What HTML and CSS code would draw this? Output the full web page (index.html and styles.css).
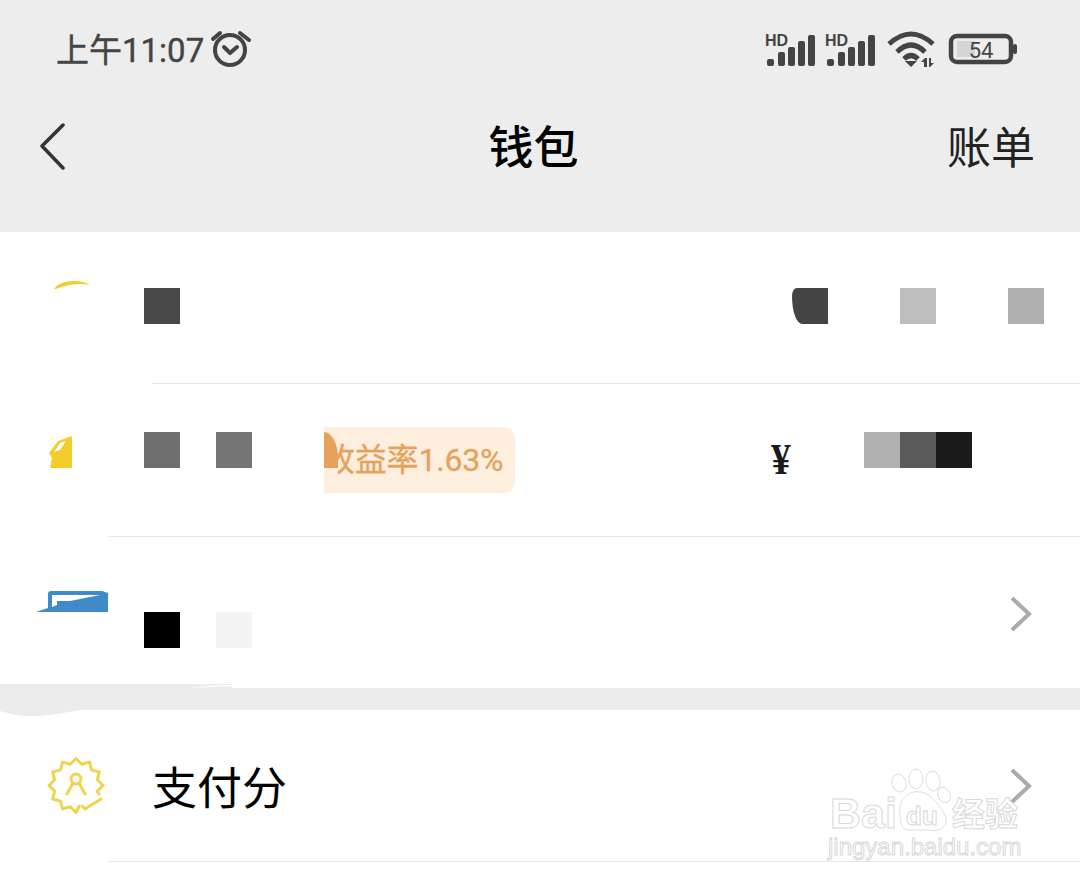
FILE: index.html
```html
<!DOCTYPE html>
<html lang="zh-CN">
<head>
    <meta charset="UTF-8">
    <meta name="viewport" content="width=device-width, initial-scale=1.0">
    <title>钱包</title>
    <link rel="stylesheet" href="styles.css">
</head>
<body>
    <div class="page">
        <header class="top">
            <div class="status-bar">
                <span class="clock">上午11:07</span>
                <svg class="alarm" width="44" height="40" viewBox="210 29 44 40">
                    <circle cx="230" cy="50" r="15" />
                    <path d="M213 39 L220 33 M240 33 L249 40 M224 47 L230 53 L237 47" />
                </svg>
                <div class="status-icons">
                    <svg class="signal" width="52" height="36" viewBox="765 30 52 36">
                        <text class="hd" x="765" y="45">HD</text>
                        <rect x="767" y="58" width="7" height="7" rx="2" />
                        <rect x="778" y="51" width="7" height="14" rx="2" />
                        <rect x="788" y="46" width="7" height="19" rx="2" />
                        <rect x="798" y="40" width="7" height="25" rx="2" />
                        <rect x="808" y="34" width="7" height="31" rx="2" />
                    </svg>
                    <svg class="signal" width="52" height="36" viewBox="765 30 52 36">
                        <text class="hd" x="765" y="45">HD</text>
                        <rect x="767" y="58" width="7" height="7" rx="2" />
                        <rect x="778" y="51" width="7" height="14" rx="2" />
                        <rect x="788" y="46" width="7" height="19" rx="2" />
                        <rect x="798" y="40" width="7" height="25" rx="2" />
                        <rect x="808" y="34" width="7" height="31" rx="2" />
                    </svg>
                    <svg class="wifi" width="48" height="38" viewBox="887 30 48 38">
                        <path class="wifi-arc" d="M889 44 Q911 24 933 44 M897 52 Q911 38 925 52 M904 59 Q911 52 918 59" />
                        <path class="wifi-fill" d="M905 61 L917 61 L911 67 Z M924 67 L924 62 L921 62 L925 58 L927 58 L927 67 Z M929 58 L931 58 L931 63 L934 63 L930 67 L929 67 Z" />
                    </svg>
                    <svg class="battery" width="70" height="32" viewBox="948 33 70 32">
                        <rect class="battery-level" x="957" y="41" width="18" height="16" />
                        <rect class="battery-shell" x="951" y="36" width="60" height="26" rx="6" />
                        <rect class="battery-nub" x="1013" y="44" width="4" height="10" rx="2" />
                        <text class="battery-text" x="981" y="58">54</text>
                    </svg>
                </div>
            </div>
            <nav class="nav-bar">
                <div class="nav-back">
                    <svg width="26" height="48" viewBox="40 121 26 48">
                        <path d="M63 124 L42 145 L63 167" />
                    </svg>
                </div>
                <h1 class="nav-title">钱包</h1>
                <a class="nav-link">账单</a>
            </nav>
        </header>

        <section class="list">
            <div class="row row-first">
                <svg class="row-icon" width="144" height="152" viewBox="0 232 144 152">
                    <path class="icon-yellow" d="M54 289 Q60 281 74 281 Q84 281 90 285 Q74 282 56 289 Z" />
                </svg>
                <div class="row-body row-body-first">
                    <span class="px px-a"></span>
                    <div class="px-group px-group-right">
                        <span class="px px-b"></span>
                        <span class="px px-c"></span>
                        <span class="px px-d"></span>
                    </div>
                </div>
            </div>

            <div class="row">
                <svg class="row-icon" width="144" height="153" viewBox="0 384 144 153">
                    <path class="icon-yellow" d="M50 468 L52 458 L49 453 L58 441 L72 436 L72 468 Z" />
                    <path class="icon-white" d="M54 452 L60 443 L66 441 L60 450 Z" />
                </svg>
                <div class="row-body row-body-second">
                    <div class="px-group">
                        <span class="px px-e"></span>
                        <span class="px px-f"></span>
                    </div>
                    <div class="rate-tag">
                        <span class="rate-block"></span>
                        <span class="rate-clip"><span class="rate-text">收益率1.63%</span></span>
                    </div>
                    <span class="yen">¥</span>
                    <div class="amount">
                        <span class="px px-g"></span>
                        <span class="px px-h"></span>
                        <span class="px px-i"></span>
                    </div>
                </div>
            </div>

            <div class="row row-last">
                <svg class="row-icon" width="144" height="151" viewBox="0 537 144 151">
                    <path class="icon-blue" d="M36 612 L48 608 L48 594 Q48 591 51 591 L102 591 L108 593 L108 612 Z" />
                    <path class="icon-white" d="M52 595 L100 595 L70 601 L57 601 L57 605 L52 607 Z" />
                </svg>
                <div class="row-body row-body-third">
                    <div class="px-group">
                        <span class="px px-j"></span>
                        <span class="px px-k"></span>
                    </div>
                    <svg class="chevron chevron-third" width="24" height="38" viewBox="0 0 24 38">
                        <path d="M3 3 L20 19 L3 35" />
                    </svg>
                </div>
            </div>
        </section>

        <div class="gap"></div>

        <section class="list">
            <div class="row row-score">
                <svg class="row-icon" width="144" height="152" viewBox="0 710 144 152">
                    <g class="badge">
                        <path d="M79 806 L76 812.500 L70.300 806.800 L62.500 808.900 L60.400 801.100 L52.600 799 L54.700 791.200 L49 785.500 L54.700 779.800 L52.600 772 L60.400 769.900 L62.500 762.100 L70.300 764.200 L76 758.500 L81.700 764.200 L89.500 762.100 L91.600 769.900 L99.400 772 L97.300 779.800 L103 785.500 L97.300 791.200 L99 794" />
                        <circle cx="76" cy="779" r="5" />
                        <path d="M67 794 L73 783 M85 794 L79 783 M82 806 L85 809 L101 799" />
                    </g>
                </svg>
                <div class="row-body row-body-score">
                    <span class="score-label">支付分</span>
                    <svg class="chevron" width="24" height="38" viewBox="0 0 24 38">
                        <path d="M3 3 L20 19 L3 35" />
                    </svg>
                </div>
            </div>
        </section>

        <!-- smeared edge of the grey band -->
        <svg class="smear" width="260" height="40" viewBox="0 680 260 40">
            <path class="smear-grey" d="M0 684 L232 684 L232 710 L80 710 Q50 716 30 716 Q15 716 0 711 Z" />
            <path class="smear-white" d="M190 688 Q210 685 232 685 L232 686 Q210 687 190 688 Z" />
        </svg>

        <svg class="watermark" width="210" height="110" viewBox="825 760 210 110">
            <text class="wm-big" x="830" y="828">Bai</text>
            <ellipse cx="899" cy="783" rx="7" ry="9" transform="rotate(-15 899 783)" />
            <ellipse cx="916" cy="779" rx="7" ry="10" />
            <ellipse cx="933" cy="781" rx="7" ry="10" transform="rotate(-10 933 781)" />
            <ellipse cx="944" cy="795" rx="6" ry="8" transform="rotate(-25 944 795)" />
            <path d="M900 814 C898 800 908 790 920 792 C930 792 944 810 946 818 C948 828 938 832 930 830 L908 830 C902 830 900 824 900 814 Z" />
            <text class="wm-du" x="906" y="825">du</text>
            <text class="wm-cjk" x="952" y="826">经验</text>
            <text class="wm-url" x="828" y="855">jingyan.baidu.com</text>
        </svg>
    </div>
</body>
</html>
```

FILE: styles.css
```css
* {
    margin: 0;
    padding: 0;
    box-sizing: border-box;
}

body {
    background: white;
    font-family: "Roboto", "Noto Sans CJK SC", sans-serif;
}

.page {
    position: relative;
    width: 1080px;
    height: 884px;
    overflow: hidden;
    background: white;
}

.top {
    height: 232px;
    background: #ededed;
}

.status-bar {
    display: flex;
    align-items: center;
    height: 98px;
    padding-left: 56px;
    color: #444;
}

.clock {
    margin-top: 3px;
    font-size: 33px;
    line-height: 40px;
    width: 154px;
    white-space: nowrap;
    -webkit-text-stroke: 0.4px #444;
}

.alarm {
    fill: none;
    stroke: #444;
    stroke-width: 4;
    stroke-linecap: round;
    stroke-linejoin: round;
}

.status-icons {
    display: flex;
    align-items: center;
    margin-left: auto;
    margin-right: 62px;
    gap: 8px;
}

.signal {
    fill: #444;
}

.hd {
    font-family: "Liberation Sans", sans-serif;
    font-size: 16px;
    font-weight: 700;
}

.wifi {
    margin-left: 2px;
    margin-right: 5px;
}

.wifi-arc {
    fill: none;
    stroke: #444;
    stroke-width: 5;
}

.wifi-fill {
    fill: #444;
}

.battery-level {
    fill: #d5d5d5;
}

.battery-shell {
    fill: none;
    stroke: #444;
    stroke-width: 4.5;
}

.battery-nub {
    fill: #444;
}

.battery-text {
    font-family: "Roboto", sans-serif;
    font-size: 22px;
    fill: #444;
    text-anchor: middle;
}

.nav-bar {
    display: flex;
    align-items: center;
    height: 96px;
    padding-left: 40px;
    padding-right: 46px;
}

.nav-back {
    display: flex;
    width: 80px;
}

.nav-back path {
    fill: none;
    stroke: #333;
    stroke-width: 3.5;
    stroke-linecap: round;
    stroke-linejoin: round;
}

.nav-title {
    flex: 1;
    margin-top: -2px;
    font-family: "Noto Sans CJK SC", sans-serif;
    font-size: 45px;
    font-weight: 500;
    line-height: 60px;
    text-align: center;
    color: #000;
}

.nav-link {
    margin-top: -2px;
    margin-right: -1px;
    font-family: "Noto Sans CJK SC", sans-serif;
    font-size: 44px;
    line-height: 60px;
    color: #222;
}

.list {
    background: white;
}

.row {
    position: relative;
    display: flex;
    align-items: flex-start;
    height: 153px;
}

.row::after {
    content: "";
    position: absolute;
    left: 108px;
    right: 0;
    bottom: 0;
    height: 1px;
    background: #e6e6e6;
}

.row-first {
    height: 152px;
}

.row-first::after {
    left: 152px;
}

.row-last {
    height: 151px;
}

.row-last::after {
    display: none;
}

.row-score {
    height: 152px;
}

.row-icon {
    flex-shrink: 0;
    display: block;
}

.icon-yellow {
    fill: #f3cd2c;
}

.icon-white {
    fill: white;
}

.icon-blue {
    fill: #3f8bc9;
}

.badge {
    fill: none;
    stroke: #eed44f;
    stroke-width: 3;
    stroke-linecap: round;
    stroke-linejoin: round;
}

.row-body {
    flex: 1;
    display: flex;
    align-items: flex-start;
}

.row-body-first {
    padding-top: 56px;
    padding-right: 36px;
}

.row-body-second {
    padding-top: 48px;
    padding-right: 108px;
}

.row-body-third {
    padding-top: 75px;
    padding-right: 47px;
    justify-content: space-between;
}

.row-body-score {
    align-self: stretch;
    align-items: center;
    justify-content: space-between;
    padding-left: 8px;
    padding-right: 47px;
}

.px-group {
    display: flex;
    gap: 36px;
}

.px-group-right {
    margin-left: auto;
    gap: 72px;
}

.px {
    display: block;
    width: 36px;
    height: 36px;
}

.px-a { background: #484848; }
.px-b { background: #444; border-radius: 5px 0 0 10px / 8px 0 0 28px; }
.px-c { background: #bdbdbd; }
.px-d { background: #afafaf; }
.px-e { background: #6e6e6e; }
.px-f { background: #757575; }
.px-g { background: #b0b0b0; }
.px-h { background: #5a5a5a; }
.px-i { background: #1a1a1a; }
.px-j { background: #000; }
.px-k { background: #f4f4f4; }

.rate-tag {
    display: flex;
    align-items: flex-start;
    width: 191px;
    height: 66px;
    margin-top: -5px;
    margin-left: 72px;
    padding-top: 5px;
    background: #fdeede;
    border-radius: 0 12px 12px 0;
}

.rate-block {
    flex-shrink: 0;
    width: 14px;
    height: 36px;
    background: #e5a25a;
    border-radius: 0 14px 0 0 / 0 26px 0 0;
}

.rate-clip {
    flex: 1;
    overflow: hidden;
    white-space: nowrap;
    margin-top: -5px;
    line-height: 66px;
}

.rate-text {
    margin-left: -15px;
    font-size: 32px;
    letter-spacing: -0.2px;
    color: #e5a25a;
    -webkit-text-stroke: 0.3px #e5a25a;
}

.yen {
    margin-left: auto;
    margin-top: 3px;
    font-family: "Liberation Serif", serif;
    font-size: 44px;
    font-weight: 700;
    line-height: 50px;
    color: #1a1a1a;
    transform: scaleX(0.9);
}

.amount {
    display: flex;
    margin-left: 72px;
}

.chevron {
    flex-shrink: 0;
}

.chevron path {
    fill: none;
    stroke: #aaa;
    stroke-width: 4;
}

.chevron-third {
    margin-top: -17px;
}

.score-label {
    font-family: "Noto Sans CJK SC", sans-serif;
    font-size: 45px;
    line-height: 60px;
    color: #000;
}

.gap {
    height: 22px;
    background: #ececec;
}

.smear {
    position: absolute;
    left: 0;
    top: 680px;
}

.smear-grey {
    fill: #ececec;
}

.smear-white {
    fill: white;
}

.watermark {
    position: absolute;
    left: 825px;
    top: 760px;
}

.watermark ellipse,
.watermark path {
    fill: rgba(255, 255, 255, 0.4);
    stroke: #ddd;
    stroke-width: 1;
}

.watermark text {
    fill: rgba(255, 255, 255, 0.4);
    stroke: #d8d8d8;
    stroke-width: 1;
}

.wm-big {
    font-family: "Liberation Sans", sans-serif;
    font-size: 43px;
    font-weight: 700;
}

.wm-du {
    font-family: "Liberation Sans", sans-serif;
    font-size: 26px;
    font-weight: 700;
}

.wm-cjk {
    font-family: "Noto Sans CJK SC", sans-serif;
    font-size: 33px;
    font-weight: 700;
}

.wm-url {
    font-family: "Liberation Sans", sans-serif;
    font-size: 24px;
}
```
